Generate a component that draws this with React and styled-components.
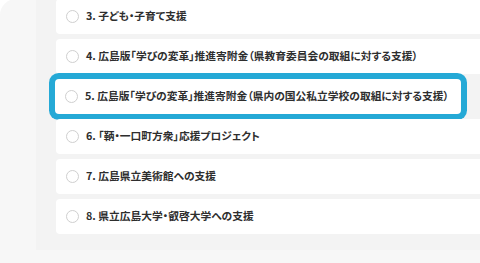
import React from "react";
import styled, { createGlobalStyle } from "styled-components";

const GlobalStyle = createGlobalStyle`
  html, body {
    margin: 0;
    padding: 0;
    background: #ffffff;
    overflow: hidden;
  }
  body {
    font-family: "Noto Sans CJK JP", "Noto Sans", sans-serif;
  }
`;

const Page = styled.div`
  width: 480px;
  height: 263px;
  overflow: hidden;
  background: #ffffff;
`;

const OuterPanel = styled.div`
  width: 640px;
  min-height: 300px;
  margin-top: -1px;
  padding-left: 36px;
  background: #f7f7f7;
  border-top-left-radius: 16px;
  box-sizing: border-box;
`;

const Column = styled.div`
  display: flex;
  flex-direction: column;
  gap: 5px;
  padding: 0 0 16px 20px;
  background: #f3f3f3;
`;

const Card = styled.label`
  display: flex;
  align-items: center;
  gap: 7px;
  height: 35px;
  box-sizing: border-box;
  padding-left: 10px;
  background: #ffffff;
  border-radius: 4px;
  width: ${(p) => (p.$highlight ? "406px" : "auto")};
  margin-left: ${(p) => (p.$highlight ? "-1px" : "0")};
  box-shadow: ${(p) => (p.$highlight ? "0 0 0 6px #25a9d6" : "none")};
`;

const Radio = styled.span`
  flex: none;
  width: 13px;
  height: 13px;
  box-sizing: border-box;
  border: 1px solid #cfcfcf;
  border-radius: 50%;
  background: #ffffff;
`;

const Text = styled.span`
  font-size: 10.75px;
  font-weight: 700;
  color: #2e2e2e;
  white-space: nowrap;
  line-height: 1;
  font-feature-settings: "palt";
`;

const items = [
  "3. 子ども・子育て支援",
  "4. 広島版「学びの変革」推進寄附金（県教育委員会の取組に対する支援）",
  "5. 広島版「学びの変革」推進寄附金（県内の国公私立学校の取組に対する支援）",
  "6. 「鞆・一口町方衆」応援プロジェクト",
  "7. 広島県立美術館への支援",
  "8. 県立広島大学・叡啓大学への支援",
];

export default function App() {
  return (
    <>
      <GlobalStyle />
      <Page>
        <OuterPanel>
          <Column>
            {items.map((t, i) => (
              <Card key={t} $highlight={i === 2}>
                <Radio />
                <Text>{t}</Text>
              </Card>
            ))}
          </Column>
        </OuterPanel>
      </Page>
    </>
  );
}
